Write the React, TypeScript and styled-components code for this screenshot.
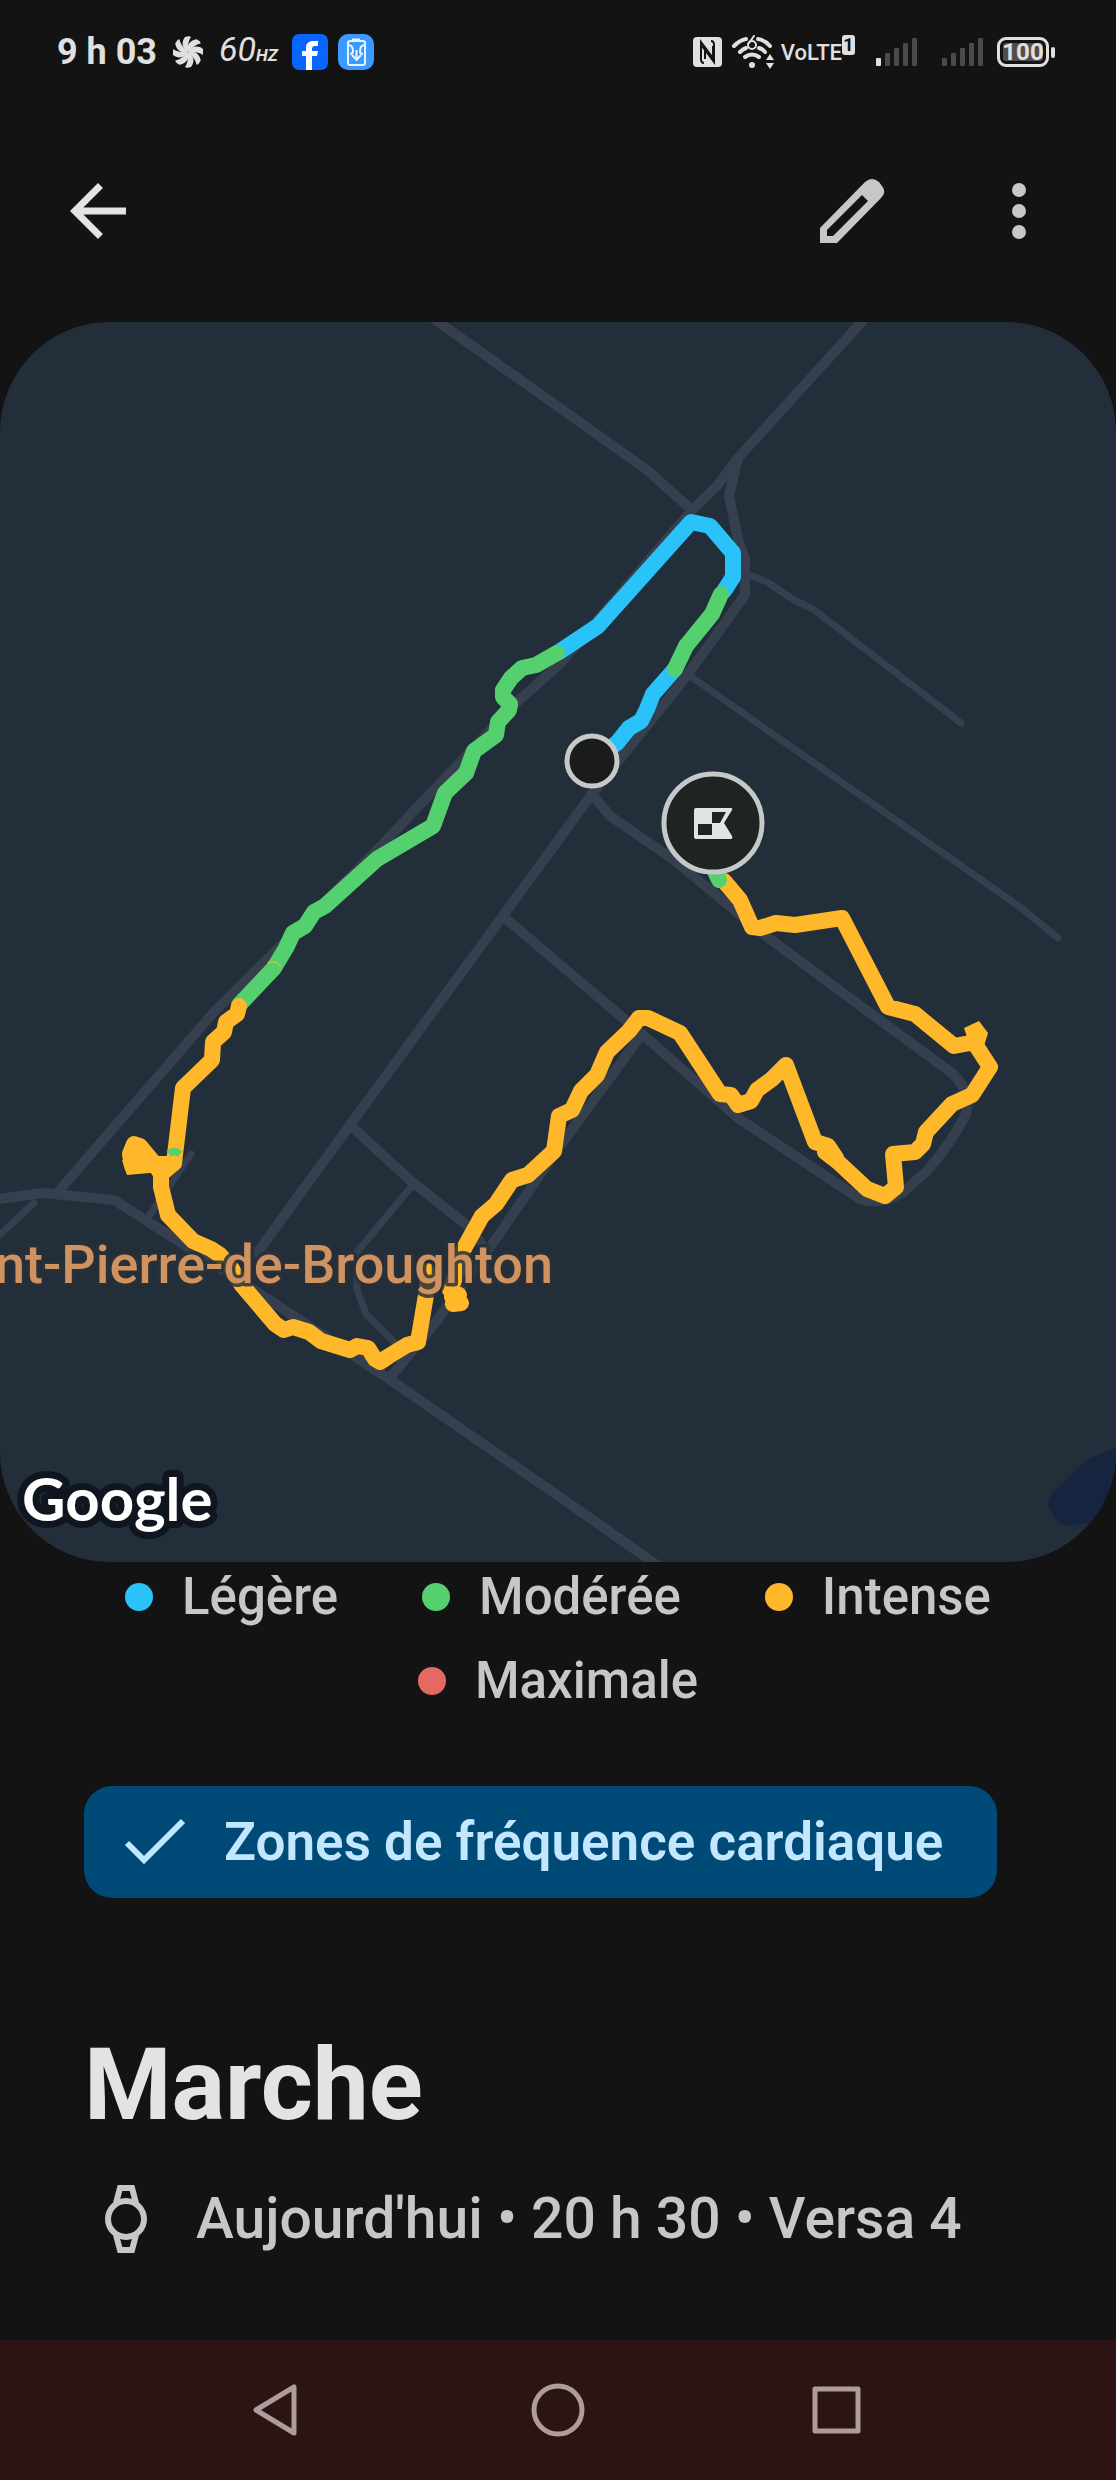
import React from 'react';
import styled, { createGlobalStyle } from 'styled-components';

const color = {
  page: '#131313',
  status: '#e0e0e0',
  textStrong: '#e3e3e3',
  text: '#c7c7c7',
  chip: '#004a77',
  chipText: '#c2e7ff',
  land: '#232e3b',
  road: '#363f4d',
  water: '#17243f',
  place: '#d0935f',
  navBar: '#2c1414',
  navIcon: '#ad9c9c',
  light: '#29c2f9',
  moderate: '#54d16e',
  intense: '#ffb829',
  maximal: '#e46962',
};

const GlobalStyle = createGlobalStyle`
  *, *::before, *::after { box-sizing: border-box; }
  body {
    margin: 0;
    background: ${color.page};
    font-family: Roboto, "Liberation Sans", sans-serif;
  }
  svg { display: block; }
`;

const Screen = styled.div`
  display: flex;
  flex-direction: column;
  min-height: 100vh;
  background: ${color.page};
  color: ${color.text};
`;

const StatusBar = styled.header`
  display: flex;
  justify-content: space-between;
  align-items: center;
  height: 100px;
  padding: 4px 61px 0 57px;
  color: ${color.status};
`;

const StatusGroup = styled.div<{ $gap: number }>`
  display: flex;
  align-items: center;
  gap: ${(p) => p.$gap}px;
`;

const Clock = styled.time`
  margin-right: 6px;
  font-size: 36px;
  line-height: 40px;
  font-weight: 700;
`;

const RefreshRate = styled.span`
  margin: 0 4px 0 6px;
  font-size: 34px;
  line-height: 40px;
  font-style: italic;
  font-weight: 400;
`;

const RateUnit = styled.span`
  font-size: 17px;
  font-weight: 700;
`;

const VolteBadge = styled.span`
  display: flex;
  align-items: flex-start;
  padding-top: 1px;
  font-size: 22px;
  line-height: 36px;
  font-weight: 500;
`;

const SimNumber = styled.span`
  width: 13px;
  height: 20px;
  border-radius: 3px;
  background: ${color.status};
  color: ${color.page};
  font-size: 18px;
  line-height: 20px;
  font-weight: 700;
  text-align: center;
`;

const Signals = styled.div`
  display: flex;
  gap: 24px;
  margin: 0 6px 0 14px;
`;

const Battery = styled.span`
  display: flex;
  align-items: center;
  gap: 2px;
  &::after {
    content: '';
    width: 4px;
    height: 11px;
    border-radius: 2px;
    background: ${color.status};
  }
`;

const BatteryLevel = styled.span`
  width: 52px;
  height: 30px;
  border: 3px solid ${color.status};
  border-radius: 9px;
  background: #4d4d4d;
  box-shadow: inset 0 0 0 3px ${color.page};
  font-size: 24px;
  line-height: 25px;
  font-weight: 700;
  text-align: center;
`;

const AppBar = styled.nav`
  display: flex;
  justify-content: space-between;
  align-items: center;
  height: 222px;
  padding: 0 55px 0 56px;
`;

const Actions = styled.div`
  display: flex;
  gap: 83px;
`;

const IconButton = styled.button<{ $strong?: boolean }>`
  display: flex;
  padding: 0;
  border: 0;
  background: none;
  color: ${(p) => (p.$strong ? color.textStrong : color.text)};
  cursor: pointer;
`;

const MapCard = styled.section`
  overflow: hidden;
  border-radius: 110px;
  background: ${color.land};
  svg { width: 100%; height: auto; }
`;

const PlaceName = styled.text`
  fill: ${color.place};
  stroke: #28303a;
  stroke-width: 7px;
  stroke-opacity: 0.85;
  stroke-linejoin: round;
  paint-order: stroke;
  font-size: 54px;
  font-weight: 500;
`;

const MapBrand = styled.text`
  fill: #fff;
  stroke: #0f161f;
  stroke-width: 14px;
  stroke-linejoin: round;
  paint-order: stroke;
  font-family: Lato, Roboto, sans-serif;
  font-size: 60px;
  font-weight: 700;
`;

const Legend = styled.ul`
  display: flex;
  flex-wrap: wrap;
  justify-content: center;
  gap: 24px 84px;
  margin: 0;
  padding: 5px 84px 0;
  list-style: none;
`;

const LegendItem = styled.li<{ $dot: string }>`
  display: flex;
  align-items: center;
  gap: 29px;
  font-size: 51px;
  line-height: 60px;
  font-weight: 500;
  &::before {
    content: '';
    width: 28px;
    height: 28px;
    border-radius: 50%;
    background: ${(p) => p.$dot};
  }
`;

const Details = styled.main`
  display: flex;
  flex-direction: column;
  align-items: flex-start;
  padding: 75px 84px;
`;

const FilterChip = styled.button`
  display: flex;
  align-items: center;
  gap: 36px;
  height: 112px;
  padding: 0 54px 0 40px;
  border: 0;
  border-radius: 28px;
  background: ${color.chip};
  color: ${color.chipText};
  font: 600 53px/64px Roboto, "Liberation Sans", sans-serif;
  cursor: pointer;
`;

const Title = styled.h1`
  margin: 127px 0 38px;
  color: ${color.textStrong};
  font-size: 100px;
  line-height: 120px;
  font-weight: 700;
`;

const Meta = styled.p`
  display: flex;
  align-items: center;
  gap: 48px;
  margin: 0;
  padding-left: 20px;
  font-size: 57px;
  line-height: 72px;
  font-weight: 500;
`;

const SystemNav = styled.footer`
  display: flex;
  justify-content: center;
  align-items: center;
  gap: 180px;
  height: 140px;
  margin-top: auto;
  background: ${color.navBar};
`;

const NavButton = styled.button`
  display: flex;
  justify-content: center;
  width: 100px;
  padding: 0;
  border: 0;
  background: none;
  color: ${color.navIcon};
  cursor: pointer;
`;

const FanIcon = () => (
  <svg width="30" height="32" viewBox="-15 -16 30 32" fill="currentColor" aria-hidden="true">
    {[0, 45, 90, 135, 180, 225, 270, 315].map((a) => (
      <path key={a} transform={`rotate(${a})`} d="M0 0C-6-3-7-10-3-15C0-16 2-16 3-15C0-11 0-6 0 0Z" />
    ))}
  </svg>
);

const FacebookIcon = () => (
  <svg width="36" height="36" viewBox="0 0 36 36" aria-label="Facebook">
    <rect width="36" height="36" rx="7" fill="#0866ff" />
    <path d="M14 36V22H10V17H14V14C14 9 17 7 21 7H26V12H23C21 12 20 13 20 15V17H26L25 22H20V36Z" fill="#fff" />
  </svg>
);

const PowerAppIcon = () => (
  <svg width="36" height="36" viewBox="0 0 36 36" fill="none" stroke="#e4f3ff" strokeWidth="2" strokeLinejoin="round" aria-hidden="true">
    <rect width="36" height="36" rx="10" fill="#3b9aff" stroke="none" />
    <rect x="10" y="7" width="17" height="24" rx="2" />
    <path d="M14 6H22" strokeWidth="3" />
    <path d="M11 11Q15 12 15 17Q15 20 12 20M26 11Q22 12 22 17Q22 20 25 20M14 21L18.500 26L23 21M18.500 16V25" />
  </svg>
);

const NfcIcon = () => (
  <svg width="29" height="30" viewBox="0 0 29 30" aria-label="NFC">
    <rect width="29" height="30" rx="4" fill="currentColor" />
    <path d="M11 26Q8 26 8 22V5L20 21V9M18 4Q21 4 21 8V25L9 9M12 13V22" fill="none" stroke={color.page} strokeWidth="2" />
  </svg>
);

const WifiIcon = () => (
  <svg width="45" height="34" viewBox="-3 0 45 34" fill="none" stroke="currentColor" strokeWidth="4" strokeLinecap="round" aria-label="Wi-Fi 6">
    <path d="M2 11Q8 5 14 4M26 4Q33 5 38 11" />
    <path d="M8 17Q11 14 14 13M27 13Q31 14 33 17" />
    <path d="M13 22Q20 17 27 22" />
    <circle cx="20" cy="10" r="4" strokeWidth="2" />
    <path d="M17 8L22 1" strokeWidth="2" />
    <circle cx="20" cy="30" r="3" fill="currentColor" stroke="none" />
    <path d="M34 25L38 19L42 25ZM34 28H42L38 34Z" fill="currentColor" stroke="none" />
  </svg>
);

const SignalIcon = ({ level }: { level: number }) => (
  <svg width="42" height="28" viewBox="0 0 42 28" aria-label="Signal">
    {[8, 13, 18, 23, 28].map((h, i) => (
      <rect key={h} x={i * 9} y={28 - h} width="5" height={h} rx="1" fill={i < level ? color.status : '#4a4a4a'} />
    ))}
  </svg>
);

const BackIcon = () => (
  <svg width="84" height="84" viewBox="0 0 24 24" fill="currentColor" aria-hidden="true">
    <path d="M20 11H7.830L13.420 5.410L12 4L4 12L12 20L13.410 18.590L7.830 13H20Z" />
  </svg>
);

const PencilIcon = () => (
  <svg width="84" height="84" viewBox="0 0 84 84" fill="currentColor" fillRule="evenodd" aria-hidden="true">
    <path d="M10 74V59L55 13Q62 7 69 13L72 17Q77 23 71 29L27 74ZM17 67H23L58 32L52 26L17 61Z" />
  </svg>
);

const MoreIcon = () => (
  <svg width="84" height="84" viewBox="0 0 84 84" fill="currentColor" aria-hidden="true">
    <circle cx="42" cy="21" r="7" />
    <circle cx="42" cy="42" r="7" />
    <circle cx="42" cy="63" r="7" />
  </svg>
);

const CheckIcon = () => (
  <svg width="64" height="50" viewBox="0 0 64 50" fill="none" stroke="currentColor" strokeWidth="6" aria-hidden="true">
    <path d="M3 26L20 43L59 4" />
  </svg>
);

const WatchIcon = () => (
  <svg width="44" height="68" viewBox="0 0 44 68" fill="none" stroke="currentColor" aria-hidden="true">
    <circle cx="22" cy="34" r="18" strokeWidth="6" />
    <path d="M12 18L16 3H28L32 18M12 50L16 65H28L32 50" strokeWidth="6" />
  </svg>
);

const TrackLine = ({ points, zone }: { points: string; zone: string }) => (
  <polyline points={points} fill="none" stroke={zone} strokeWidth="16" strokeLinecap="round" strokeLinejoin="round" />
);

const RouteMap = () => (
  <svg viewBox="0 322 1116 1240" role="img" aria-label="Parcours de la marche">
    <path d="M1116 1448Q1095 1455 1083 1463L1052 1494Q1046 1500 1049 1507L1055 1519Q1060 1525 1070 1525L1116 1522Z" fill={color.water} />

    <g fill="none" stroke={color.road} strokeLinecap="round" strokeLinejoin="round">
      <g strokeWidth="10">
        <path d="M430 316L560 408L647 470L692 510" />
        <path d="M868 315L738 458L717 486L692 510L560 664L518 701L379 848L214 1012L57 1193" />
        <path d="M738 458L729 496L738 539L745 559V595L685 678L592 794L350 1125L257 1253" />
        <path d="M592 794L610 816L674 860L763 934L945 1068Q972 1086 966 1114Q950 1145 927 1171L902 1193Q880 1206 860 1199L738 1118L642 1034L505 918" />
        <path d="M642 1034L560 1146L493 1243L436 1322L389 1379" />
        <path d="M350 1125L411 1181L468 1226L482 1245" />
        <path d="M-8 1200L43 1193L114 1200L186 1246L271 1301L389 1379L560 1497L664 1570" />
      </g>
      <g strokeWidth="7">
        <path d="M752 576L767 582L794 600L813 609L961 723" />
        <path d="M690 676L1020 907L1058 938" />
        <path d="M34 1203L-6 1240" />
        <path d="M411 1187L357 1252V1289L366 1314L396 1344" />
        <path d="M191 1154L149 1216" />
      </g>
    </g>

    <TrackLine zone={color.light} points="592,761 617,743 629,728 641,721 647,709 653,694 675,669" />
    <TrackLine zone={color.light} points="724,591 733,577 733,553 710,526 691,522 598,626 559,652" />
    <TrackLine zone={color.moderate} points="675,669 686,646 712,614 721,594" />
    <TrackLine zone={color.moderate} points="557,653 536,665 522,668 511,678 503,690 503,697 510,704 509,710 498,722 496,735 474,751 466,773 445,793 433,826 377,859 325,906 314,912 305,926 293,933 286,948 274,968 239,1005" />
    <TrackLine zone={color.intense} points="239,1006 237,1014 226,1022 224,1032 213,1042 212,1060 183,1088 174,1163 161,1174 154,1163 140,1146 134,1144 130,1154 132,1166 154,1164 172,1164" />
    <path d="M122 1160L127 1175L160 1172V1160Z" fill={color.intense} />
    <TrackLine zone={color.intense} points="174,1163 161,1174 161,1187 168,1215 193,1241 211,1249 220,1255 232,1269 241,1284 275,1324 284,1330 293,1327 309,1332 321,1341 350,1350 357,1346 368,1348 375,1359 380,1362 389,1356 407,1345 418,1342 427,1289 427,1271" />
    <TrackLine zone={color.intense} points="452,1297 461,1303 453,1304 459,1295 450,1290 458,1270 462,1252 482,1216 496,1204 512,1180 528,1175 554,1151 559,1116 572,1110 581,1091 597,1075 607,1052 629,1031 639,1018 648,1018 680,1033 720,1094 731,1095 738,1105 751,1101 757,1090 772,1079 786,1065 815,1142 828,1146 836,1158 825,1152 838,1162 867,1189 885,1196 896,1187 893,1154 915,1152 923,1144 926,1132 952,1104 972,1095 990,1067 975,1044 970,1043 954,1046 915,1014 888,1007 842,918 795,925 776,923 760,928 752,927 740,900 724,881" />
    <path d="M964 1028L979 1021L988 1033L984 1046L968 1040Z" fill={color.intense} />
    <TrackLine zone={color.moderate} points="713,867 719,880" />
    <path d="M169 1154Q174 1149 180 1154" fill="none" stroke={color.moderate} strokeWidth="7" />
    <path d="M268 963Q276 959 281 967" fill="none" stroke="#a3c94c" strokeWidth="2" />

    <circle cx="592" cy="761" r="25" fill="#1a1c1b" stroke="#c7c9c9" strokeWidth="5" />
    <circle cx="713" cy="823" r="49" fill="#1d2422" stroke="#c7c9c9" strokeWidth="5" />
    <path d="M696 808H731Q733 808 732 810L724 823L732 836Q733 839 731 839H696Q694 839 694 837V810Q694 808 696 808ZM712 812V823H720L726 812ZM698 824V835H712V824Z" fill="#e0e5e3" fillRule="evenodd" />

    <PlaceName x="553" y="1283" textAnchor="end">nt-Pierre-de-Broughton</PlaceName>
    <MapBrand x="22" y="1521">Google</MapBrand>
  </svg>
);

const zones = [
  { label: 'Légère', dot: color.light },
  { label: 'Modérée', dot: color.moderate },
  { label: 'Intense', dot: color.intense },
  { label: 'Maximale', dot: color.maximal },
];

export default function App() {
  const [zonesShown, setZonesShown] = React.useState(true);
  return (
    <Screen>
      <GlobalStyle />
      <StatusBar>
        <StatusGroup $gap={10}>
          <Clock>9 h 03</Clock>
          <FanIcon />
          <RefreshRate>60<RateUnit>HZ</RateUnit></RefreshRate>
          <FacebookIcon />
          <PowerAppIcon />
        </StatusGroup>
        <StatusGroup $gap={7}>
          <NfcIcon />
          <WifiIcon />
          <VolteBadge>VoLTE<SimNumber>1</SimNumber></VolteBadge>
          <Signals>
            <SignalIcon level={1} />
            <SignalIcon level={0} />
          </Signals>
          <Battery><BatteryLevel>100</BatteryLevel></Battery>
        </StatusGroup>
      </StatusBar>

      <AppBar>
        <IconButton $strong aria-label="Retour"><BackIcon /></IconButton>
        <Actions>
          <IconButton aria-label="Modifier"><PencilIcon /></IconButton>
          <IconButton aria-label="Plus d'options"><MoreIcon /></IconButton>
        </Actions>
      </AppBar>

      <MapCard><RouteMap /></MapCard>

      <Legend>
        {zones.map((z) => (
          <LegendItem key={z.label} $dot={z.dot}>{z.label}</LegendItem>
        ))}
      </Legend>

      <Details>
        <FilterChip type="button" aria-pressed={zonesShown} onClick={() => setZonesShown(!zonesShown)}>
          <CheckIcon />
          Zones de fréquence cardiaque
        </FilterChip>
        <Title>Marche</Title>
        <Meta>
          <WatchIcon />
          Aujourd'hui • 20 h 30 • Versa 4
        </Meta>
      </Details>

      <SystemNav>
        <NavButton aria-label="Précédent">
          <svg width="56" height="56" viewBox="0 0 56 56" fill="none" stroke="currentColor" strokeWidth="5" strokeLinejoin="round">
            <path d="M6 28L44 5V51Z" />
          </svg>
        </NavButton>
        <NavButton aria-label="Accueil">
          <svg width="56" height="56" viewBox="0 0 56 56" fill="none" stroke="currentColor" strokeWidth="5">
            <circle cx="28" cy="28" r="24" />
          </svg>
        </NavButton>
        <NavButton aria-label="Applications récentes">
          <svg width="56" height="56" viewBox="0 0 56 56" fill="none" stroke="currentColor" strokeWidth="5" strokeLinejoin="round">
            <rect x="5" y="7" width="43" height="42" />
          </svg>
        </NavButton>
      </SystemNav>
    </Screen>
  );
}
